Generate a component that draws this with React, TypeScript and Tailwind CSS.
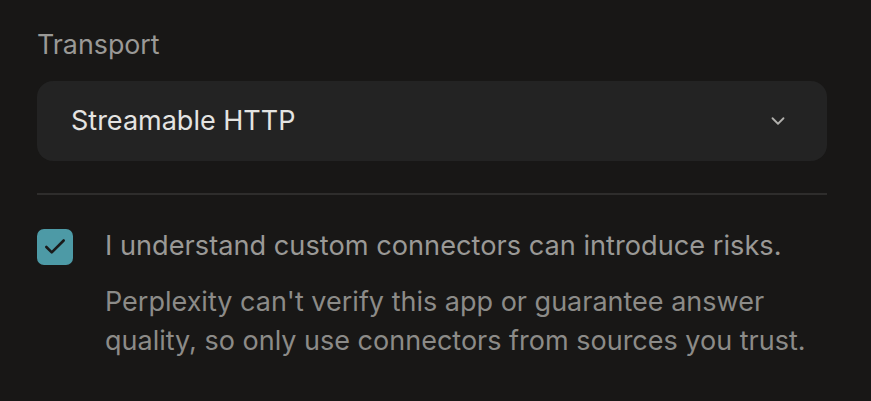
import { ChevronDown, Check } from "lucide-react";

const App = () => {
  return (
    <div
      className="min-h-[401px] w-full bg-[#181716] px-[37px] pt-[28px] text-[#e8e8e6]"
      style={{ fontFamily: "Inter, 'Noto Sans', sans-serif" }}
    >
      <div className="w-[790px]">
        <label className="block text-[26.8px] leading-[32px] text-[#9a9996]">Transport</label>
        <button
          type="button"
          className="mt-[21px] flex h-[80px] w-full items-center justify-between rounded-[16px] bg-[#232323] pl-[34px] pr-[38px]"
        >
          <span className="text-[27px] text-[#e4e4e2]">Streamable HTTP</span>
          <ChevronDown className="h-[22px] w-[22px] text-[#b0afac]" strokeWidth={2} />
        </button>
        <div className="mt-[32px] h-[2px] w-full bg-[#2e2d2c]" />
        <div className="mt-[32px] flex items-start gap-[32px]">
          <div className="mt-[2px] flex h-[36px] w-[36px] shrink-0 items-center justify-center rounded-[7px] bg-[#4d9aa6]">
            <Check className="h-[26px] w-[26px] text-[#1a1a1a]" strokeWidth={2.4} />
          </div>
          <div>
            <p className="whitespace-nowrap text-[27.2px] leading-[38px] text-[#9a9996]">
              I understand custom connectors can introduce risks.
            </p>
            <p className="mt-[17px] whitespace-nowrap text-[27px] leading-[39px] text-[#8c8b88]">
              Perplexity can't verify this app or guarantee answer
              <br />
              quality, so only use connectors from sources you trust.
            </p>
          </div>
        </div>
      </div>
    </div>
  );
};

export default App;
